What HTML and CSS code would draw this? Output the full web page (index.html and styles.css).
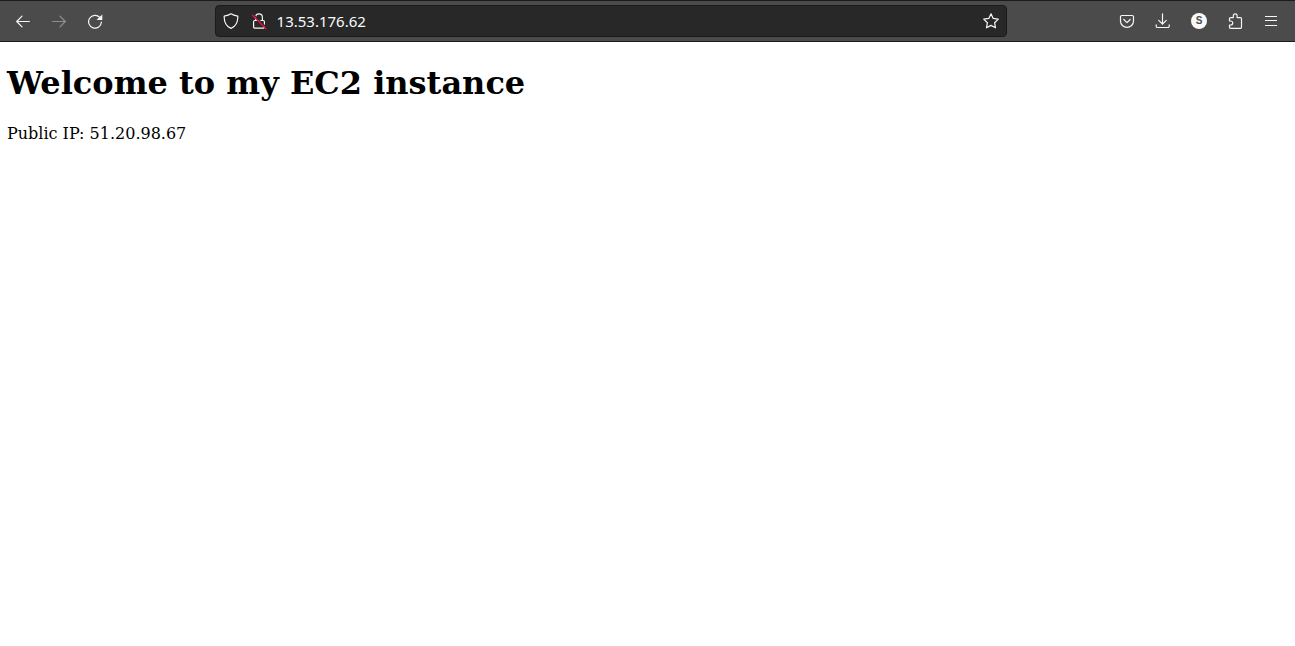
FILE: index.html
```
<!DOCTYPE html>
<html lang="en">
<head>
<meta charset="utf-8">
<title>Welcome to my EC2 instance</title>
<link rel="stylesheet" href="styles.css">
</head>
<body>
<header class="toolbar">
  <nav class="group" aria-label="Navigation">
    <button class="tool" type="button" aria-label="Back"><svg class="icon" viewBox="0 0 16 16"><path d="M14.400 8.500H1.700M7 3.200L1.700 8.500 7 13.800"/></svg></button>
    <button class="tool" type="button" aria-label="Forward" disabled><svg class="icon" viewBox="0 0 16 16"><path d="M1.600 8.500h12.700M9 3.200l5.300 5.300L9 13.800"/></svg></button>
    <button class="tool" type="button" aria-label="Reload"><svg class="icon" viewBox="0 0 16 16"><path d="M12.800 4.500A6.400 6.400 0 1 0 14.400 9"/><path class="solid" d="M15.300 1.500V7H9.500z"/></svg></button>
  </nav>
  <div class="spacer"></div>
  <div class="address">
    <button class="badge" type="button" aria-label="Tracking protection"><svg class="icon" viewBox="0 0 16 16"><path d="M8 .8C6.200 2.100 3.500 2.800 1.200 3.100 1 8.500 2.200 12.800 8 15.400 13.800 12.800 15 8.500 14.800 3.100 12.500 2.800 9.800 2.100 8 .8z"/></svg></button>
    <button class="badge" type="button" aria-label="Connection not secure"><svg class="icon" viewBox="0 0 16 16"><path d="M4.600 7.500V4.200a3.400 3.400 0 0 1 6.800 0v3.300M3.800 7.500h8.400a1.200 1.200 0 0 1 1.200 1.200v5.200a1.200 1.200 0 0 1-1.200 1.200H3.800a1.200 1.200 0 0 1-1.200-1.200V8.700a1.200 1.200 0 0 1 1.200-1.200z"/><path class="gap" d="M2.800 1.800L15.500 14.500"/><path class="strike" d="M1.500 2.200L14.800 15.500"/></svg></button>
    <input class="url" type="text" value="13.53.176.62" aria-label="Address" spellcheck="false">
    <button class="badge" type="button" aria-label="Bookmark this page"><svg class="icon" viewBox="0 0 16 16"><path d="M8 .8l2.200 4.600 5.100.7-3.700 3.600.9 5.100L8 12.400l-4.500 2.400.9-5.100L.7 6.100l5.100-.7z"/></svg></button>
  </div>
  <div class="spacer"></div>
  <div class="group">
    <button class="tool" type="button" aria-label="Save to Pocket"><svg class="icon" viewBox="0 0 16 16"><path d="M2.800 2.500h10.400a1.300 1.300 0 0 1 1.300 1.300V7.900a6.500 6.500 0 0 1-13 0V3.800a1.300 1.300 0 0 1 1.300-1.300zM4.800 6.500L8 9.600l3.200-3.100"/></svg></button>
    <button class="tool" type="button" aria-label="Downloads"><svg class="icon" viewBox="0 0 16 16"><path d="M7.500.8v10.400M3.700 7.400l3.800 3.800 3.800-3.800M1.200 11.800v1.400a1.300 1.300 0 0 0 1.300 1.300h10.400a1.300 1.300 0 0 0 1.300-1.300v-1.400"/></svg></button>
    <button class="tool" type="button" aria-label="Account"><span class="avatar">S</span></button>
    <button class="tool" type="button" aria-label="Extensions"><svg class="icon" viewBox="0 0 16 16"><path d="M2.500 8V5.600a1 1 0 0 1 1-1H6.300V2.700a1.900 1.900 0 0 1 3.800 0v1.900h3.400a1 1 0 0 1 1 1v8.700a1 1 0 0 1-1 1h-10a1 1 0 0 1-1-1V12h1.200a2 2 0 0 0 0-4H2.500z"/></svg></button>
    <button class="tool" type="button" aria-label="Menu"><svg class="icon" viewBox="0 0 16 16"><path class="line" d="M2 3.500h12M2 7.500h12M2 12.500h12"/></svg></button>
  </div>
</header>
<main class="page">
  <h1 class="title">Welcome to my EC2 instance</h1>
  <p class="text">Public IP: 51.20.98.67</p>
</main>
</body>
</html>
```
FILE: styles.css
```
* {
  box-sizing: border-box;
}

body {
  margin: 0;
  background: #fff;
  color: #000;
  font-family: "DejaVu Serif", serif;
  font-size: 16px;
}

.toolbar {
  display: flex;
  align-items: center;
  height: 42px;
  padding: 0 6px 0 5px;
  background: #4b4b4b;
  border-top: 1px solid #1c1b1c;
  border-bottom: 1px solid #1c1b1c;
  color: #f6f6f6;
}

.group {
  display: flex;
}

.spacer {
  flex: 102 1 0;
}

.tool,
.badge {
  display: flex;
  align-items: center;
  justify-content: center;
  padding: 0;
  border: 0;
  background: none;
  color: inherit;
}

.tool {
  width: 36px;
  height: 32px;
}

.tool:disabled {
  opacity: 0.4;
}

.badge {
  flex: none;
  width: 28px;
  height: 28px;
}

.icon {
  display: block;
  width: 16px;
  height: 16px;
  fill: none;
  stroke: currentColor;
  stroke-width: 1.2;
  stroke-linecap: round;
  stroke-linejoin: round;
}

.icon .solid {
  fill: currentColor;
  stroke: none;
}

.icon .line {
  stroke-width: 1;
  stroke-linecap: butt;
}

.icon .gap {
  stroke: #282828;
}

.icon .strike {
  stroke: #e2143f;
  stroke-width: 1.4;
}

.address {
  flex: 792 1 0;
  display: flex;
  align-items: center;
  min-width: 0;
  height: 32px;
  padding: 0 1px;
  background: #282828;
  border: 1px solid #1a1a1a;
  border-radius: 4px;
}

.url {
  flex: 1;
  min-width: 0;
  padding: 0 4px;
  border: 0;
  outline: 0;
  background: none;
  color: #fbfbfe;
  font-family: "Noto Sans", sans-serif;
  font-size: 15px;
  line-height: 24px;
}

.avatar {
  width: 16px;
  height: 16px;
  border-radius: 50%;
  background: #f9f9fa;
  color: #4b4b4b;
  font: bold 10px/16px "Liberation Sans", sans-serif;
  text-align: center;
}

.page {
  padding: 0 7px;
}

.title {
  margin: 22px 0;
  font-size: 32px;
  line-height: 38px;
}

.text {
  margin: 0;
  line-height: 19px;
}
```
